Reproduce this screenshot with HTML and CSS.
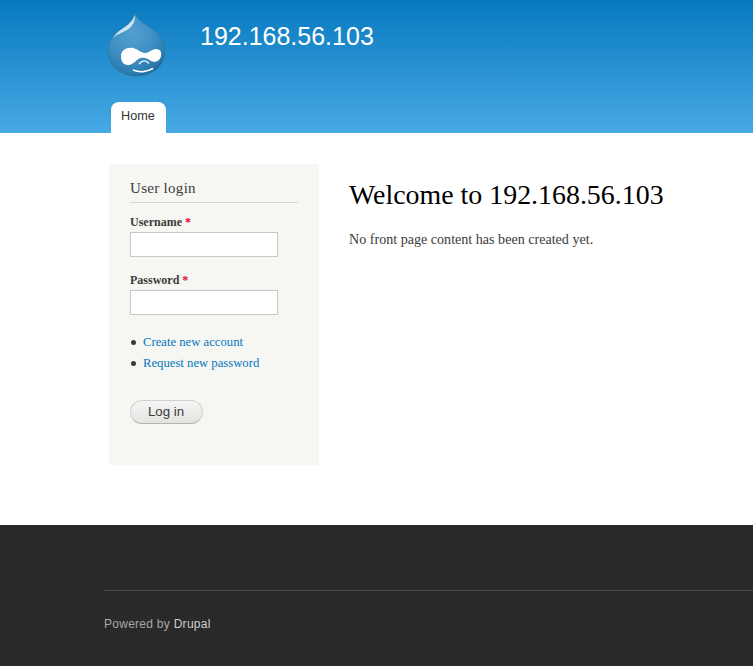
FILE: index.html
```html
<!DOCTYPE html>
<html lang="en">
<head>
<meta charset="utf-8">
<title>192.168.56.103</title>
<link rel="stylesheet" href="styles.css">
</head>
<body>
<header class="site-header">
  <div class="brand">
    <svg class="logo" viewBox="0 0 60 66" width="60" height="66" aria-label="Drupal logo">
      <defs>
        <radialGradient id="drop" cx="42%" cy="32%" r="72%">
          <stop offset="0" stop-color="#559fd0"/>
          <stop offset="0.6" stop-color="#3c8dc2"/>
          <stop offset="0.9" stop-color="#2a7aad"/>
          <stop offset="1" stop-color="#1a6596"/>
        </radialGradient>
      </defs>
      <path d="M28 0.5C29 6 34 10 41 14C51 20 58 28 58 39C58 54 45 64 29.5 64C14 64 1 54 1 39C1 27 9 20 17 15C22 12 27 7 28 0.5Z" fill="url(#drop)" stroke="#2f75a3" stroke-width="0.7"/>
      <path d="M27.5 3C26 9 21 13 15 17C11 19.5 8 22.5 6 26C10 22 15 21 20 18C25 15 29 9 27.5 3Z" fill="#d8ecf7" opacity="0.9"/>
      <path d="M14 44C14 38 20 35 26 36C31 37 34 41 38 41C42 41 45 37 49 37C53 37 55 40 54 44C53 49 48 51 44 49C41 47 38 45 34 46C29 47 27 53 21 53C16 53 14 49 14 44Z" fill="#fff"/>
      <path d="M26 58C32 60.5 40 60 46 56.5" fill="none" stroke="#fff" stroke-width="1.8"/>
      <path d="M32 52C35 48 39 48 42 51.5" fill="none" stroke="#fff" stroke-width="1.3"/>
    </svg>
    <div class="site-name">192.168.56.103</div>
  </div>
  <nav class="tabs"><a class="tab" href="#">Home</a></nav>
</header>
<div class="content">
  <aside class="sidebar">
    <h2 class="block-title">User login</h2>
    <form class="login">
      <label class="field-label" for="u">Username <span class="req">*</span></label>
      <input class="field-input" id="u" type="text">
      <label class="field-label second" for="p">Password <span class="req">*</span></label>
      <input class="field-input" id="p" type="password">
      <ul class="links">
        <li><a href="#">Create new account</a></li>
        <li><a href="#">Request new password</a></li>
      </ul>
      <button class="submit" type="button">Log in</button>
    </form>
  </aside>
  <main class="main">
    <h1 class="page-title">Welcome to 192.168.56.103</h1>
    <p class="intro">No front page content has been created yet.</p>
  </main>
</div>
<footer class="site-footer">
  <div class="footer-rule">Powered by <a href="#">Drupal</a></div>
</footer>
</body>
</html>
```
FILE: styles.css
```css
* { box-sizing: border-box; }
html, body { margin: 0; padding: 0; }
body {
  background: #fff;
  color: #3b3b3b;
  font-family: "Liberation Serif", serif;
  font-size: 14px;
  height: 666px;
  overflow: hidden;
}
a { color: #0071b3; text-decoration: none; }

.site-header {
  height: 133px;
  background: linear-gradient(to bottom, #0779bf, #48a9e4);
  padding-left: 107px;
  display: flex;
  flex-direction: column;
}
.brand { display: flex; height: 102px; padding-top: 12px; }
.logo { display: block; flex: none; }
.site-name {
  margin-left: 33px;
  margin-top: 8px;
  color: #fff;
  font-family: "Liberation Sans", sans-serif;
  font-size: 25px;
  line-height: 32px;
}
.tabs { padding-left: 4px; display: flex; }
.tab {
  width: 55px;
  height: 31px;
  background: #fff;
  border-radius: 8px 8px 0 0;
  color: #333;
  font-family: "Liberation Sans", sans-serif;
  font-size: 12.7px;
  line-height: 29px;
  text-align: center;
  padding-right: 1px;
}

.content { display: flex; height: 392px; padding: 31px 0 0 109px; }
.sidebar {
  width: 210px;
  height: 301px;
  background: #f6f6f2;
  padding: 15px 21px 0;
  flex: none;
}
.block-title {
  margin: 0;
  height: 24px;
  border-bottom: 1px solid #d6d6d6;
  font-size: 15px;
  font-weight: normal;
  line-height: 18px;
  letter-spacing: 0.3px;
  color: #3b3b3b;
}
.login { display: flex; flex-direction: column; align-items: flex-start; }
.field-label {
  margin-top: 12px;
  font-size: 12px;
  font-weight: bold;
  line-height: 14px;
  height: 17px;
}
.field-label.second { margin-top: 16px; }
.req { color: #e3002b; }
.field-input {
  display: block;
  width: 148px;
  height: 25px;
  margin: 0;
  padding: 2px;
  border: 1px solid #c8c8c8;
  background: #fff;
}
.links { list-style: none; margin: 17px 0 0; padding: 0; font-size: 12.7px; }
.links li { position: relative; height: 21px; line-height: 21px; padding-left: 13px; }
.links li::before {
  content: "";
  position: absolute;
  left: 1px;
  top: 8px;
  width: 5px;
  height: 5px;
  border-radius: 50%;
  background: #3b3b3b;
}
.links a { color: #0678be; }
.submit {
  margin-top: 26px;
  width: 73px;
  height: 24px;
  padding: 0 1px 2px 0;
  border: 1px solid #d0d0d0;
  border-bottom-color: #b4b4b0;
  border-radius: 12px;
  background: linear-gradient(to bottom, #f5f5f3, #e4e4e2);
  color: #3a3a3a;
  font-family: "Liberation Sans", sans-serif;
  font-size: 13.3px;
}

.main { padding-left: 30px; flex: 1; min-width: 0; }
.page-title {
  margin: 14px 0 0;
  color: #000;
  font-size: 27.9px;
  font-weight: normal;
  line-height: 34px;
  white-space: nowrap;
}
.intro { margin: 17px 0 0; font-size: 14.1px; line-height: 21px; }

.site-footer {
  height: 141px;
  background: #292929;
  padding: 65px 0 0 104px;
}
.footer-rule {
  border-top: 1px solid #4a4a4a;
  padding-top: 25px;
  color: #a8a8a8;
  font-family: "Liberation Sans", sans-serif;
  font-size: 12px;
  line-height: 16px;
  letter-spacing: 0.27px;
}
.footer-rule a { color: #cfcfcf; }
```
